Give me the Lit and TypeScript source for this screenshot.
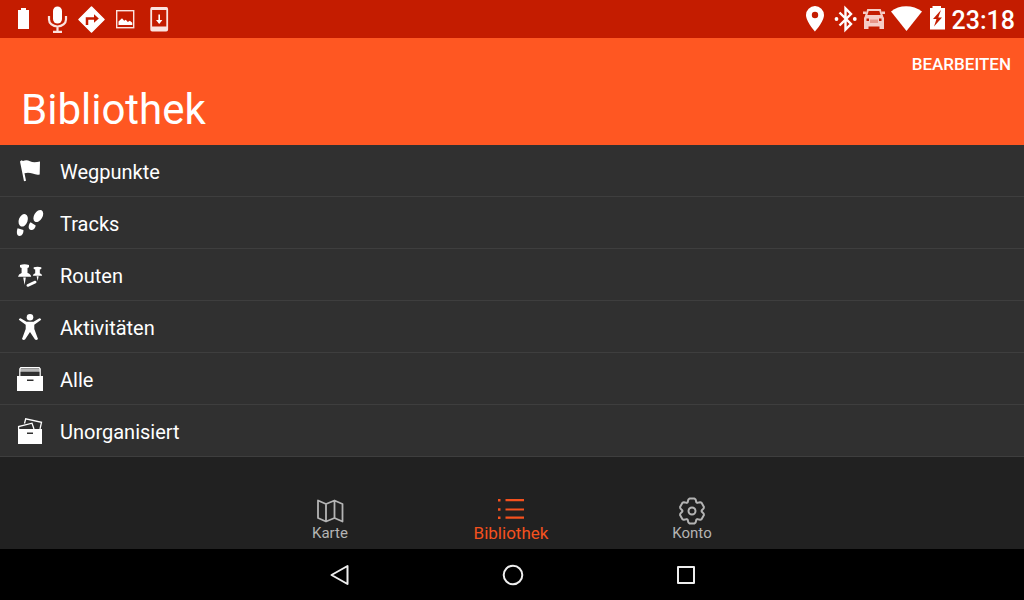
import { LitElement, html, css, svg, TemplateResult } from "lit";
import { customElement, property, state } from "lit/decorators.js";
import { classMap } from "lit/directives/class-map.js";

const gearPath = (() => {
  const tooth = [[-4.4, -8.6], [-3.6, -11.4], [-2.4, -12.4], [2.4, -12.4], [3.6, -11.4], [4.4, -8.6]];
  const points: string[] = [];
  for (let k = 0; k < 6; k++) {
    const a = (k * Math.PI) / 3;
    for (const [x, y] of tooth) {
      const px = 14 + x * Math.cos(a) - y * Math.sin(a);
      const py = 14 + x * Math.sin(a) + y * Math.cos(a);
      points.push(`${px.toFixed(2)} ${py.toFixed(2)}`);
    }
  }
  return `M${points.join("L")}Z`;
})();

// Status bar glyphs, 28 units high
const statusIcons: Record<string, TemplateResult> = {
  battery: svg`<path fill="#fff" d="M12 3h5v2h3v19H9V5h3z"/>`,
  mic: svg`<rect x="10" y="1.500" width="9" height="17" rx="4.500" fill="#fff"/>
    <path d="M6 11v3.500a8.500 7 0 0 0 17 0V11M14.500 21.500V27M10 26.800h9" fill="none" stroke="#fbe3df" stroke-width="2.200"/>`,
  turn: svg`<path fill="#fff" stroke="#fff" stroke-width="1.500" stroke-linejoin="round" d="M14.500 2 27 14.500 14.500 27 2 14.500z"/>
    <path d="M10 20v-6.500h8" fill="none" stroke="#c41c00" stroke-width="2.500"/><path fill="#c41c00" d="M17 9.200 21.800 13.500 17 17.800z"/>`,
  image: svg`<rect x="5.700" y="5.700" width="17" height="17" fill="none" stroke="#fbe3df" stroke-width="1.400"/>
    <path fill="#fff" d="M7.500 20v-3.500l3.500-3.200 2.200 2.400 1.600-1 2 2.300 2-1.200 2.500 2V20z"/>`,
  download: svg`<rect x="6.200" y="3" width="16" height="22.500" rx="1" fill="none" stroke="#fbe3df" stroke-width="1.800"/>
    <path fill="#fbe3df" d="M6 21.500h16V26H6zM6 2.500h16V5H6z"/><path d="M14.200 9.500v7" stroke="#fff" stroke-width="1.600"/><path fill="#fff" d="M11 15h6.400l-3.200 4z"/>`,
  pin: svg`<path fill="#fff" fill-rule="evenodd" d="M14 1a9 9 0 0 0-9 9c0 6.500 9 16.500 9 16.500S23 16.500 23 10a9 9 0 0 0-9-9zm0 5.800a3.200 3.200 0 1 1 0 6.400 3.200 3.200 0 0 1 0-6.400z"/>`,
  bluetooth: svg`<path d="M7.500 7.500 19 19l-5.500 5.500V3.500L19 9 7.500 20.500" fill="none" stroke="#fff" stroke-width="2.400"/>
    <circle cx="4.500" cy="14" r="1.900" fill="#fff"/><circle cx="22.800" cy="14" r="1.900" fill="#fff"/>`,
  car: svg`<path fill="none" stroke="#f6cdc6" stroke-width="2" d="M6 11 8 5h12L22 11"/>
    <path fill="#f6cdc6" fill-rule="evenodd" d="M3 6.500h3V9H3zM22 6.500h3V9h-3zM5.500 10h17l1.500 3v11h-4.500v-2.500h-11V24H4V13zM6.500 13.500V16H9v-2.500zm12.500 0V16h2.500v-2.500z"/>
    <path d="M11 14.500V18M13 14.500V18M15 14.500V18M17 14.500V18" stroke="#d9604c" stroke-width="1"/>`,
  wifi: svg`<path fill="#fff" d="M1 6.500C9-.5 23-.5 32 6.500L16.500 26z"/>`,
  charging: svg`<path fill="#fff" d="M3.500 1h8.500v2h4v21.500H1V3h2.500z"/><path fill="#c41c00" d="M12 5 4 14h3.500L5 21.500 13 12.500H9.300z"/>`,
};

// Library row glyphs on a 30 unit grid
const rowIcons: Record<string, TemplateResult> = {
  flag: svg`<path d="M5 5.500 6.500 4.200 8 5Q11.500 3.400 15 5.200T25 5.400L24.700 18.500Q21.500 19.300 17.500 17.600T9.500 17.200L11 24.700 9 25.300Z"/>`,
  tracks: svg`<ellipse cx="8.200" cy="12.300" rx="4.400" ry="6.500" transform="rotate(20 8.200 12.300)"/>
    <path d="M2.600 20.200 8.400 22C8.800 24.500 7.200 28 4.500 28 1.500 28 1.400 23.500 2.600 20.200Z"/>
    <ellipse cx="23.300" cy="8" rx="4.200" ry="6.600" transform="rotate(30 23.300 8)"/>
    <path d="M15.600 14.200 20.700 17.600C20.400 20.500 18 22.600 15.800 22 12.600 21 13.400 16.500 15.600 14.200Z"/>`,
  routes: svg`<path d="M5 5Q9.500 3.600 14 5V7.200L12.500 8V13Q15.800 14 16.200 16.800H3Q3.400 14 6.600 13V8L5 7.200ZM8.200 17.500h2.600L9.600 25Z"/>
    <path d="M18.700 7.200Q22.500 6.200 26.300 7.200V9L24.800 9.600V13.300Q27 14 27.200 15.800H17.800Q18 14 20.200 13.300V9.600L18.700 9ZM21.600 16.300h2L22.700 21Z"/>
    <path d="M12.800 25.500 20.200 22" fill="none" stroke="#fff" stroke-width="2.600" stroke-linecap="round"/>`,
  activity: svg`<circle cx="15" cy="5.200" r="3.300"/>
    <path d="M3.800 7.800Q4.500 5.600 6 6.600L11.500 9.700H18.500L24 6.600Q25.500 5.600 26.200 7.800L19.300 12.700V17L23 27Q21.500 28.800 20 27.600L15 20 10 27.600Q8.500 28.800 7 27L10.700 17V12.700Z"/>`,
  all: svg`<path d="M4.800 12V5L5.800 3.600H24.200L25.200 5V12" fill="none" stroke="#fff" stroke-width="1.200"/>
    <path d="M5 4.500H25V6.500H5Z" opacity=".65"/><path d="M5 7H25" stroke="#fff"/>
    <path fill-rule="evenodd" d="M2 12H28V27H2ZM12 15.500V17H18.500V15.500Z"/>`,
  unsorted: svg`<path d="M9.500 7.500 10.700 2.800 26.500 6.300 25 13M3.600 13V10.500L17 7.200 19 13" fill="none" stroke="#fff" stroke-width="1.300"/>
    <path fill-rule="evenodd" d="M3 13H27V28H3ZM12 16.500V18H18V16.500Z"/>`,
};

const tabIcons: Record<string, TemplateResult> = {
  map: svg`<path d="M2 3.500 10 7 18.500 3.500 26.500 7V24.500L18.500 21 10 24.500 2 21ZM10 7V24.500M18.500 3.500V21" fill="none" stroke="currentColor" stroke-width="1.800" stroke-linejoin="round"/>`,
  list: svg`<path d="M8.500 3.200H27M8.500 12.500H27M8.500 20.700H27" fill="none" stroke="currentColor" stroke-width="2.200"/>
    <path d="M1 3.200H3.500M1 12.500H3.500M1 20.700H3.500" fill="none" stroke="currentColor" stroke-width="2.600"/>`,
  gear: svg`<path d=${gearPath} fill="none" stroke="currentColor" stroke-width="2" stroke-linejoin="round"/>
    <circle cx="14" cy="14" r="3.500" fill="none" stroke="currentColor" stroke-width="2"/>`,
};

@customElement("status-bar")
export class StatusBar extends LitElement {
  static styles = css`
    :host {
      display: flex;
      justify-content: space-between;
      height: 38px;
      padding: 0 9px;
      background: #c41c00;
      color: #fff;
    }
    .group { display: flex; align-items: center; gap: 6px; }
    .right { gap: 2px; }
    svg { display: block; flex: none; }
    .bluetooth { margin-left: 1px; }
    .car { margin-left: -1px; }
    .charging { margin-left: 4px; }
    .clock { font-size: 25px; line-height: 36px; font-weight: 500; padding: 4px 0 0 4px; }
  `;
  private icon(name: string, width = 28) {
    return html`<svg class=${name} width=${width} height="28" viewBox="0 0 ${width} 28" aria-hidden="true">${statusIcons[name]}</svg>`;
  }
  render() {
    return html`
      <div class="group">${["battery", "mic", "turn", "image", "download"].map((n) => this.icon(n))}</div>
      <div class="group right">
        ${this.icon("pin")}${this.icon("bluetooth", 27)}${this.icon("car")}${this.icon("wifi", 33)}${this.icon("charging", 17)}
        <time class="clock">23:18</time>
      </div>
    `;
  }
}

@customElement("library-row")
export class LibraryRow extends LitElement {
  @property() icon = "";
  @property() label = "";
  static styles = css`
    :host { display: block; border-bottom: 1px solid #3e3e3e; background: #303030; }
    .row {
      display: flex;
      align-items: flex-start;
      gap: 15px;
      width: 100%;
      height: 51px;
      padding: 11px 15px 0;
      border: 0;
      background: none;
      color: #fff;
      font: 400 20px/32px Roboto, sans-serif;
      text-align: left;
    }
    svg { flex: none; fill: #fff; }
  `;
  render() {
    return html`<button class="row" type="button">
      <svg width="30" height="30" viewBox="0 0 30 30" aria-hidden="true">${rowIcons[this.icon]}</svg>
      <span>${this.label}</span>
    </button>`;
  }
}

@customElement("app-root")
export class AppRoot extends LitElement {
  @state() private active = "list";

  private rows = [
    ["flag", "Wegpunkte"],
    ["tracks", "Tracks"],
    ["routes", "Routen"],
    ["activity", "Aktivitäten"],
    ["all", "Alle"],
    ["unsorted", "Unorganisiert"],
  ];
  private tabs = [
    ["map", "Karte"],
    ["list", "Bibliothek"],
    ["gear", "Konto"],
  ];

  static styles = css`
    :host {
      display: flex;
      flex-direction: column;
      min-height: 100vh;
      background: #212121;
      color: #fff;
      font-family: Roboto, sans-serif;
    }
    button { border: 0; background: none; color: inherit; font-family: inherit; padding: 0; }
    header {
      display: flex;
      flex-direction: column;
      background: #ff5722;
      padding: 14px 13px 10px 18px;
    }
    .edit { align-self: flex-end; font-size: 17px; line-height: 24px; font-weight: 500; }
    h1 { margin: 9px 0 0 3px; font-size: 42px; line-height: 50px; font-weight: 400; }
    main { flex: 1; }
    ul { list-style: none; margin: 0; padding: 0; }
    .tabs { display: flex; justify-content: center; padding: 0 2px 7px 0; }
    .tab {
      display: flex;
      flex-direction: column;
      align-items: center;
      justify-content: flex-end;
      width: 181px;
      color: #b4b4b4;
      font-size: 15px;
      line-height: 17px;
    }
    .tab svg { display: block; }
    .active { color: #f4511e; font-size: 17px; }
    .system { display: flex; justify-content: center; background: #000; padding-left: 2px; }
    .key { display: flex; justify-content: center; align-items: center; width: 173px; height: 51px; }
    .key svg { fill: none; stroke: #eee; stroke-width: 2; stroke-linejoin: round; }
  `;

  private key(label: string, shape: TemplateResult) {
    return html`<button class="key" type="button" aria-label=${label}>
      <svg width="24" height="24" viewBox="0 0 24 24">${shape}</svg>
    </button>`;
  }

  render() {
    return html`
      <status-bar></status-bar>
      <header>
        <button class="edit" type="button">BEARBEITEN</button>
        <h1>Bibliothek</h1>
      </header>
      <main>
        <ul>
          ${this.rows.map(([icon, label]) => html`<li><library-row icon=${icon} label=${label}></library-row></li>`)}
        </ul>
      </main>
      <nav class="tabs">
        ${this.tabs.map(
          ([id, label]) => html`<button
            type="button"
            class=${classMap({ tab: true, active: this.active === id })}
            @click=${() => (this.active = id)}
          >
            <svg width="28" height="28" viewBox="0 0 28 28" aria-hidden="true">${tabIcons[id]}</svg>
            <span>${label}</span>
          </button>`
        )}
      </nav>
      <nav class="system">
        ${this.key("Zurück", svg`<path d="M19.500 3V21L3.500 12Z"/>`)}
        ${this.key("Startseite", svg`<circle cx="12" cy="12" r="9.300"/>`)}
        ${this.key("Übersicht", svg`<rect x="4" y="4" width="16" height="16"/>`)}
      </nav>
    `;
  }
}
